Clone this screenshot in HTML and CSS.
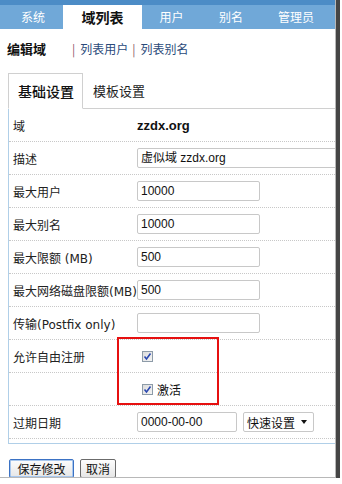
FILE: index.html
```html
<!DOCTYPE html>
<html>
<head>
<meta charset="utf-8">
<link rel="stylesheet" href="styles.css">
</head>
<body>
<div class="page">
  <div class="nav">
    <div class="nav-tab t1">系统</div>
    <div class="nav-tab t2 active">域列表</div>
    <div class="nav-tab t3">用户</div>
    <div class="nav-tab t4">别名</div>
    <div class="nav-tab t5">管理员</div>
  </div>
  <div class="subnav">
    <span class="title">编辑域</span>
    <span class="links"><span class="sep">|</span><a class="link">列表用户</a><span class="sep">|</span><a class="link">列表别名</a></span>
  </div>
  <div class="tabs">
    <div class="tab active">基础设置</div>
    <div class="tab">模板设置</div>
  </div>
  <div class="panel">
    <div class="row"><div class="label">域</div><div class="value"><span class="domain">zzdx.org</span></div></div>
    <div class="row"><div class="label">描述</div><div class="value"><div class="input wide">虚似域 zzdx.org</div></div></div>
    <div class="row"><div class="label">最大用户</div><div class="value"><div class="input">10000</div></div></div>
    <div class="row"><div class="label">最大别名</div><div class="value"><div class="input">10000</div></div></div>
    <div class="row"><div class="label">最大限额&nbsp;(MB)</div><div class="value"><div class="input">500</div></div></div>
    <div class="row"><div class="label">最大网络磁盘限额(MB)</div><div class="value"><div class="input">500</div></div></div>
    <div class="row"><div class="label">传输(Postfix only)</div><div class="value"><div class="input"></div></div></div>
    <div class="row"><div class="label">允许自由注册</div><div class="value"><span class="check"><svg width="9" height="9" viewBox="0 0 9 9"><path d="M1.5 4.5 L3.5 7 L7.5 1.5" fill="none" stroke="#2a48b0" stroke-width="1.6"/></svg></span></div></div>
    <div class="row"><div class="label"></div><div class="value"><span class="check"><svg width="9" height="9" viewBox="0 0 9 9"><path d="M1.5 4.5 L3.5 7 L7.5 1.5" fill="none" stroke="#2a48b0" stroke-width="1.6"/></svg></span><span class="check-label">激活</span></div></div>
    <div class="row"><div class="label">过期日期</div><div class="value"><div class="input date">0000-00-00</div><div class="select"><span>快速设置</span><span class="arrow"></span></div></div></div>
  </div>
  <div class="buttons">
    <div class="btn primary">保存修改</div>
    <div class="btn">取消</div>
  </div>
  <div class="redbox"></div>
</div>
</body>
</html>
```
FILE: styles.css
```css
html, body {
  margin: 0;
  padding: 0;
  background: #fff;
}
body {
  font-family: "DejaVu Sans", "Noto Sans CJK SC", sans-serif;
  font-size: 12px;
  color: #222;
}
.page {
  position: relative;
  width: 335px;
  height: 477px;
  overflow: hidden;
  background: #fff;
  border-right: 1px solid #b8b8b8;
  border-bottom: 1px solid #b8b8b8;
  box-shadow: 2px 2px 0 2px #454545;
}
.nav {
  display: flex;
  height: 24px;
  padding-top: 5px;
  background: #70a8d8;
  box-shadow: inset 0 5px 0 #4c8cc6;
  font-family: "Noto Sans CJK SC", sans-serif;
}
.nav-tab {
  color: #fff;
  font-size: 12px;
  text-align: center;
  line-height: 24px;
}
.t1 { width: 60px; margin-left: 3px; }
.t2 { width: 79px; }
.t3 { width: 59px; }
.t4 { width: 60px; }
.t5 { width: 70px; }
.nav-tab.active {
  background: #fff;
  color: #111;
  font-weight: bold;
  font-size: 14px;
}
.subnav {
  display: flex;
  align-items: center;
  height: 38px;
  padding-left: 7px;
  font-family: "Noto Sans CJK SC", sans-serif;
}
.title {
  font-weight: bold;
  font-size: 13px;
  color: #111;
  width: 64px;
}
.links {
  display: flex;
  align-items: center;
  font-size: 12px;
}
.sep {
  color: #8a5a6a;
  margin: 0 5px 0 1px;
}
.link {
  color: #2a4a7a;
  margin-right: 3px;
}
.tabs {
  display: flex;
  margin-top: 6px;
  margin-left: 8px;
  height: 35px;
  border-bottom: 1px solid #d0d0d0;
  font-family: "Noto Sans CJK SC", sans-serif;
}
.tab {
  font-size: 13px;
  line-height: 35px;
  padding: 0 10px;
  color: #222;
}
.tab.active {
  box-sizing: border-box;
  font-size: 14px;
  font-weight: 500;
  color: #111;
  width: 75px;
  padding: 0 0 0 9px;
  border: 1px solid #d0d0d0;
  border-bottom: 1px solid #fff;
  margin-bottom: -1px;
  background: #fff;
  height: 36px;
  line-height: 34px;
}
.panel {
  margin-left: 8px;
  width: 340px;
  border-left: 1px solid #b0cfe8;
  border-bottom: 1px solid #b0cfe8;
  padding-bottom: 4px;
}
.row {
  display: grid;
  grid-template-columns: 128px 1fr;
  height: 32px;
  border-bottom: 1px dotted #c8c8c8;
  align-items: center;
}
.label {
  padding-left: 4px;
  white-space: nowrap;
  font-size: 12px;
  color: #222;
}
.value {
  display: flex;
  align-items: center;
}
.domain {
  font-family: "Liberation Sans", sans-serif;
  font-weight: bold;
  font-size: 13px;
  color: #111;
}
.input {
  box-sizing: border-box;
  width: 123px;
  height: 20px;
  border: 1px solid #c8c8c8;
  border-radius: 2px;
  padding-left: 3px;
  font-family: "Liberation Sans", "Noto Sans CJK SC", sans-serif;
  font-size: 12px;
  line-height: 18px;
  color: #111;
}
.input.wide { width: 210px; }
.input.date { width: 100px; }
.select {
  box-sizing: border-box;
  display: flex;
  align-items: center;
  justify-content: space-between;
  margin-left: 6px;
  width: 71px;
  height: 20px;
  border: 1px solid #c8c8c8;
  border-radius: 2px;
  padding: 0 6px 0 3px;
  font-family: "Noto Sans CJK SC", sans-serif;
  font-size: 12px;
  color: #111;
}
.arrow {
  width: 0;
  height: 0;
  border-left: 3.5px solid transparent;
  border-right: 3.5px solid transparent;
  border-top: 4px solid #111;
}
.check {
  box-sizing: border-box;
  display: inline-flex;
  align-items: center;
  justify-content: center;
  width: 11px;
  height: 11px;
  margin-left: 5px;
  border: 1px solid #8d9ba8;
  background: linear-gradient(135deg, #dcdcdc, #f4f4f4);
}
.check-label {
  margin-left: 4px;
  font-family: "Noto Sans CJK SC", sans-serif;
  font-size: 12px;
  color: #111;
}
.buttons {
  display: flex;
  gap: 6px;
  margin-top: 15px;
  margin-left: 9px;
}
.btn {
  box-sizing: border-box;
  height: 19px;
  padding: 0 5px;
  font-family: "Noto Sans CJK SC", sans-serif;
  font-size: 12px;
  line-height: 17px;
  color: #111;
  border: 1px solid #6b6b6b;
  border-radius: 2px;
  background: linear-gradient(#fdfdfd, #e6e6e6);
}
.btn.primary {
  width: 65px;
  text-align: center;
  border-color: #3b72c4;
  box-shadow: inset 0 0 0 1px #a9c8ee;
}
.redbox {
  position: absolute;
  left: 117px;
  top: 337px;
  width: 98px;
  height: 64px;
  border: 2px solid #e61010;
}
```
